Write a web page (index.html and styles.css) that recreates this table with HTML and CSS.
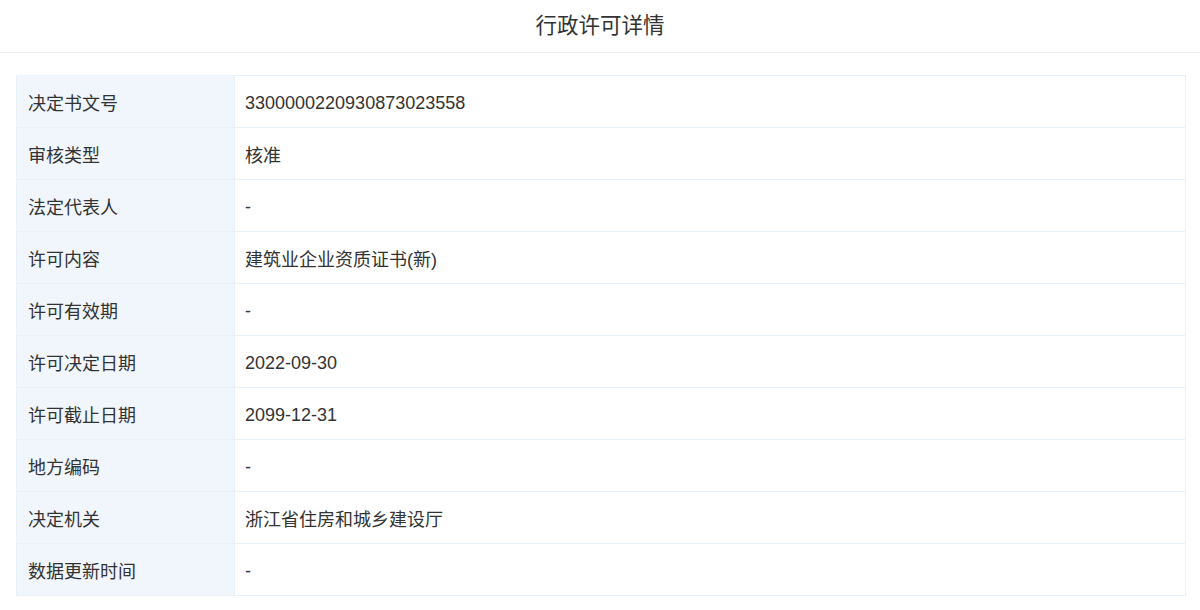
FILE: index.html
```html
<!DOCTYPE html>
<html lang="zh-CN">
<head>
<meta charset="utf-8">
<title>行政许可详情</title>
<link rel="stylesheet" href="styles.css">
</head>
<body>
<div class="header">行政许可详情</div>
<div class="content">
  <table class="detail">
    <tr><th>决定书文号</th><td class="num">3300000220930873023558</td></tr>
    <tr><th>审核类型</th><td>核准</td></tr>
    <tr><th>法定代表人</th><td class="num">-</td></tr>
    <tr><th>许可内容</th><td>建筑业企业资质证书(新)</td></tr>
    <tr><th>许可有效期</th><td class="num">-</td></tr>
    <tr><th>许可决定日期</th><td class="num">2022-09-30</td></tr>
    <tr><th>许可截止日期</th><td class="num">2099-12-31</td></tr>
    <tr><th>地方编码</th><td class="num">-</td></tr>
    <tr><th>决定机关</th><td>浙江省住房和城乡建设厅</td></tr>
    <tr><th>数据更新时间</th><td class="num">-</td></tr>
  </table>
</div>
</body>
</html>
```
FILE: styles.css
```css
html, body {
  margin: 0;
  padding: 0;
  background: #fff;
}
body {
  font-family: "Liberation Sans", "Noto Sans CJK SC", sans-serif;
  color: #333;
}
.header {
  height: 52px;
  line-height: 52px;
  text-align: center;
  font-size: 21.5px;
  color: #333;
  border-bottom: 1px solid #eef1f4;
}
.content {
  padding: 22px 14px 0 16px;
}
.detail {
  width: 1170px;
  border-collapse: collapse;
  font-size: 18px;
}
.detail th, .detail td {
  height: 51px;
  padding: 0;
  border: 1px solid #e8f0f8;
  text-align: left;
  font-weight: normal;
  vertical-align: middle;
}
.detail th {
  width: 206px;
  padding-left: 11px;
  background: #f0f6fc;
}
.detail td {
  padding-left: 10px;
  background: #fff;
}
.detail td.num {
  padding-top: 4px;
  height: 47px;
}
```
